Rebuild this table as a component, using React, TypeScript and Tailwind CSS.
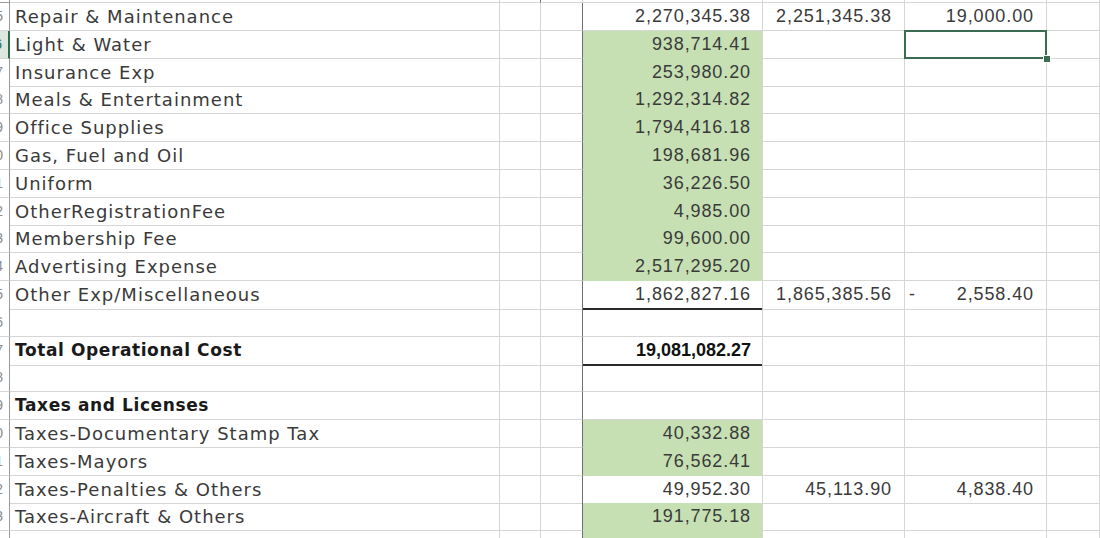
import React from "react";

type Row = {
  label?: string;
  bold?: boolean;
  d?: string;
  e?: string;
  f?: string;
  dash?: boolean;
  green?: boolean;
  rule?: boolean;
  selected?: boolean;
};

const rows: Row[] = [
  { label: "Repair & Maintenance", d: "2,270,345.38", e: "2,251,345.38", f: "19,000.00" },
  { label: "Light & Water", d: "938,714.41", green: true, selected: true },
  { label: "Insurance Exp", d: "253,980.20", green: true },
  { label: "Meals & Entertainment", d: "1,292,314.82", green: true },
  { label: "Office Supplies", d: "1,794,416.18", green: true },
  { label: "Gas, Fuel and Oil", d: "198,681.96", green: true },
  { label: "Uniform", d: "36,226.50", green: true },
  { label: "OtherRegistrationFee", d: "4,985.00", green: true },
  { label: "Membership Fee", d: "99,600.00", green: true },
  { label: "Advertising Expense", d: "2,517,295.20", green: true },
  { label: "Other Exp/Miscellaneous", d: "1,862,827.16", e: "1,865,385.56", f: "2,558.40", dash: true, rule: true },
  {},
  { label: "Total Operational Cost", bold: true, d: "19,081,082.27", rule: true },
  {},
  { label: "Taxes and Licenses", bold: true },
  { label: "Taxes-Documentary Stamp Tax", d: "40,332.88", green: true },
  { label: "Taxes-Mayors", d: "76,562.41", green: true },
  { label: "Taxes-Penalties & Others", d: "49,952.30", e: "45,113.90", f: "4,838.40" },
  { label: "Taxes-Aircraft & Others", d: "191,775.18", green: true },
  { d: "", green: true },
];

const grid = "grid grid-cols-[10px_490px_41px_42px_180px_142px_142px_1fr]";
const cell = "border-r border-b border-[#d6d6d6]";
const label = "font-['DejaVu_Sans',sans-serif] text-[18px] tracking-[1px] text-[#3a3a3a]";
const num = "font-['Liberation_Sans',Arial,sans-serif] text-[18px] tracking-[0.9px] text-[#3a3a3a]";

function RowHeader({ n, active }: { n: number; active?: boolean }) {
  return (
    <div
      className={`flex items-center justify-end overflow-hidden border-b border-[#d6d6d6] ${
        active ? "bg-[#dde7e0] border-r-2 border-r-[#2e6b4c] text-[#2e6b4c]" : "bg-white border-r border-r-[#9a9a9a] text-[#8a8a8a]"
      }`}
    >
      <span className="whitespace-nowrap pr-[6px] font-['Liberation_Sans',sans-serif] text-[14px]">{n}</span>
    </div>
  );
}

export default function App() {
  return (
    <div className="h-[538px] w-[1100px] overflow-hidden bg-white">
      {/* sliver of the row above */}
      <div className={`${grid} h-[3px]`}>
        <div className="border-r border-b border-[#9a9a9a]" />
        <div className={cell} />
        <div className="border-r border-b border-r-[#6f6f6f] border-b-[#d6d6d6]" />
        <div className={cell} />
        <div className={cell} />
        <div className={cell} />
        <div className={cell} />
        <div className={cell} />
      </div>

      {rows.map((r, i) => (
        <div key={i} className={`${grid} h-[27.8px]`}>
          <RowHeader n={45 + i} active={r.selected} />
          <div className={`${cell} flex items-center pl-[5px] whitespace-nowrap`}>
            {r.label && (
              <span className={r.bold ? "font-['DejaVu_Sans',sans-serif] text-[17px] font-bold tracking-[0.6px] text-[#1a1a1a]" : label}>
                {r.label}
              </span>
            )}
          </div>
          <div className={cell} />
          <div className="border-r border-b border-r-[#6f6f6f] border-b-[#d6d6d6]" />
          <div
            className={`flex items-center justify-end pr-[11px] border-r border-r-[#d6d6d6] ${
              r.rule ? "border-b-2 border-b-[#2a2a2a]" : r.green ? "border-b border-b-[#c6e0b4]" : "border-b border-b-[#d6d6d6]"
            } ${r.green ? "bg-[#c6e0b4]" : ""}`}
          >
            {r.d && (
              <span
                className={r.bold ? "font-['Liberation_Sans',Arial,sans-serif] text-[18px] font-bold text-[#111]" : num}
              >
                {r.d}
              </span>
            )}
          </div>
          <div className={`${cell} flex items-center justify-end pr-[12px]`}>
            {r.e && <span className={num}>{r.e}</span>}
          </div>
          <div className={`${cell} relative flex items-center justify-between pl-[4px] pr-[12px]`}>
            <span className={num}>{r.dash ? "-" : ""}</span>
            {r.f && <span className={num}>{r.f}</span>}
            {r.selected && (
              <>
                <div className="absolute -left-[1px] -top-[1px] -right-[1px] -bottom-[1px] z-10 border-2 border-[#3c6b54]" />
                <div className="absolute -right-[5px] -bottom-[5px] z-20 h-[8px] w-[8px] border border-white bg-[#3c6b54]" />
              </>
            )}
          </div>
          <div className={cell} />
        </div>
      ))}
    </div>
  );
}
